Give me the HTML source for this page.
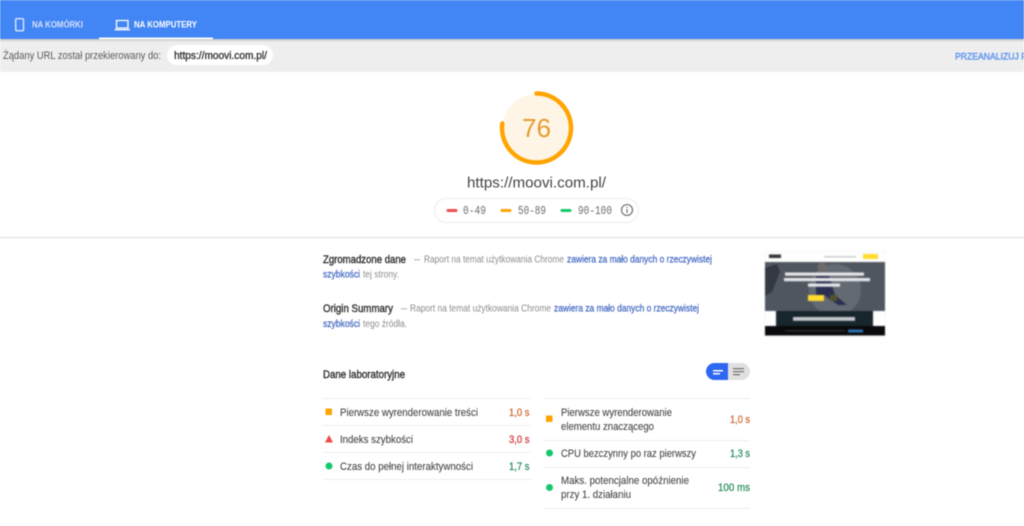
<!DOCTYPE html>
<html lang="pl"><head><meta charset="utf-8"><title>PageSpeed Insights</title>
<style>
html,body{margin:0;padding:0;background:#fff;width:1024px;height:526px;overflow:hidden}
svg{display:block;filter:blur(.45px)}
text{font-family:"Liberation Sans",sans-serif;white-space:pre}
.m{font-family:"Liberation Mono",monospace;font-size:11.5px;fill:#6a6a6a}
.b{font-size:11px;fill:#444;stroke:#444;stroke-width:.1px}
.g{font-size:10px;fill:#8c8c8c}
.l{font-size:10px;fill:#4a6fc4;stroke:#4a6fc4;stroke-width:.3px}
.h{font-size:11px;fill:#333;stroke:#333;stroke-width:.4px}
.v{font-size:11px;stroke-width:.3px}
.o{fill:#cf6f3c;stroke:#cf6f3c}.r{fill:#d2403f;stroke:#d2403f}.p{fill:#2f9261;stroke:#2f9261}
</style></head><body>
<svg width="1024" height="526" viewBox="0 0 1024 526" xmlns="http://www.w3.org/2000/svg">
<defs><linearGradient id="s" x1="0" y1="0" x2="0" y2="1"><stop offset="0" stop-color="#c4c4c4"/><stop offset="1" stop-color="#eee"/></linearGradient></defs>
<rect x="0" y="39" width="1024" height="33" fill="#eeeeee"/>
<rect x="0" y="39" width="1024" height="3" fill="url(#s)"/>
<rect x="0" y="0" width="1024" height="39" fill="#4285f4"/>
<rect x="99" y="37.5" width="114" height="1.7" fill="#fff"/>
<rect x="15.700" y="18.700" width="7.800" height="12" rx="1" fill="none" stroke="#dce8fd" stroke-width="1.400"/>
<path d="M116.500 20.500h11.500v7.500h-11.500zM114.500 29.700h15.500" fill="none" stroke="#fff" stroke-width="1.300"/>
<text x="32" y="27.500" font-size="9.500" font-weight="bold" fill="#d3e2fc" textLength="51" lengthAdjust="spacingAndGlyphs">NA KOMÓRKI</text>
<text x="134" y="27.500" font-size="9.500" font-weight="bold" fill="#fff" textLength="63" lengthAdjust="spacingAndGlyphs">NA KOMPUTERY</text>

<text x="3" y="59" font-size="11" fill="#5a5a5a" textLength="158" lengthAdjust="spacingAndGlyphs">Żądany URL został przekierowany do:</text>
<rect x="167" y="45" width="106" height="20" rx="10" fill="#fff"/>
<text x="174" y="59" font-size="11" fill="#333" stroke="#333" stroke-width=".35" textLength="93" lengthAdjust="spacingAndGlyphs">https://moovi.com.pl/</text>
<text x="955" y="59.500" font-size="9.500" fill="#5f95ef" stroke="#5f95ef" stroke-width=".4" textLength="72" lengthAdjust="spacingAndGlyphs">PRZEANALIZUJ P</text>

<circle cx="536.500" cy="128" r="34" fill="#fff5e6"/>
<path d="M536.500 93.500A34.500 34.500 0 1 1 502.300 123.500" fill="none" stroke="#ffa400" stroke-width="4.500" stroke-linecap="round"/>
<text x="522" y="137" font-size="26" fill="#e59c2e" textLength="29" lengthAdjust="spacingAndGlyphs">76</text>
<text x="467" y="187.500" font-size="15" fill="#444" textLength="139" lengthAdjust="spacingAndGlyphs">https://moovi.com.pl/</text>

<rect x="434.500" y="198.500" width="204" height="24" rx="12" fill="#fff" stroke="#ececec"/>
<rect x="446.500" y="209" width="11" height="3" rx="1.500" fill="#ee4d4d"/>
<text class="m" x="463" y="214" textLength="23" lengthAdjust="spacingAndGlyphs">0-49</text>
<rect x="500.500" y="209" width="11" height="3" rx="1.500" fill="#ffa400"/>
<text class="m" x="518" y="214" textLength="28" lengthAdjust="spacingAndGlyphs">50-89</text>
<rect x="560.500" y="209" width="11" height="3" rx="1.500" fill="#17c76f"/>
<text class="m" x="578" y="214" textLength="34" lengthAdjust="spacingAndGlyphs">90-100</text>
<circle cx="627" cy="210" r="5.500" fill="none" stroke="#666" stroke-width="1.100"/>
<path d="M627 209v4M627 206.600v1.200" stroke="#666" stroke-width="1.100"/>

<rect x="0" y="237" width="1024" height="1" fill="#dcdcdc"/>

<text class="h" x="323" y="263" textLength="83" lengthAdjust="spacingAndGlyphs">Zgromadzone dane</text>
<text class="g" x="414" y="262.500" textLength="6" lengthAdjust="spacingAndGlyphs">—</text>
<text class="g" x="424" y="262.500" textLength="140" lengthAdjust="spacingAndGlyphs">Raport na temat użytkowania Chrome</text>
<text class="l" x="567" y="262.500" textLength="145" lengthAdjust="spacingAndGlyphs">zawiera za mało danych o rzeczywistej</text>
<text class="l" x="323" y="277.500" textLength="37" lengthAdjust="spacingAndGlyphs">szybkości</text>
<text class="g" x="363" y="277.500" textLength="36" lengthAdjust="spacingAndGlyphs">tej strony.</text>

<text class="h" x="323" y="312" textLength="70" lengthAdjust="spacingAndGlyphs">Origin Summary</text>
<text class="g" x="401" y="311.500" textLength="6" lengthAdjust="spacingAndGlyphs">—</text>
<text class="g" x="410" y="311.500" textLength="141" lengthAdjust="spacingAndGlyphs">Raport na temat użytkowania Chrome</text>
<text class="l" x="554" y="311.500" textLength="145" lengthAdjust="spacingAndGlyphs">zawiera za mało danych o rzeczywistej</text>
<text class="l" x="323" y="327" textLength="37" lengthAdjust="spacingAndGlyphs">szybkości</text>
<text class="g" x="363" y="327" textLength="44" lengthAdjust="spacingAndGlyphs">tego źródła.</text>

<!-- thumbnail -->
<g style="filter:blur(.6px)">
<rect x="765" y="252" width="120" height="84" fill="#fff" stroke="#eee" stroke-width=".5"/>
<rect x="769" y="254.500" width="12" height="3.500" fill="#333"/>
<rect x="824" y="256" width="32" height="1.500" fill="#ccc"/>
<rect x="863" y="254" width="15" height="5" fill="#ffdc2e"/>
<rect x="765" y="262" width="120" height="49" fill="#50565f"/>
<circle cx="835" cy="290" r="26" fill="#646a74"/>
<circle cx="822" cy="267" r="4.500" fill="#6f6a68"/>
<path d="M816 276h13l6 19 12 10h-9l-14-10h-8z" fill="#2b3050"/>
<path d="M765 268l12-4 3 8-8 20-7 4z" fill="#343941"/>
<rect x="785" y="272.500" width="79" height="3.200" fill="#e6e7ea"/>
<rect x="784" y="278" width="86" height="3.200" fill="#e6e7ea"/>
<rect x="808" y="283.500" width="32" height="3.200" fill="#e6e7ea"/>
<rect x="808" y="295" width="16" height="6" fill="#ffdc2e"/>
<rect x="830" y="295" width="7" height="6" fill="#50522c"/>
<rect x="776" y="311" width="97" height="15" fill="#16262c"/>
<rect x="793" y="317" width="62" height="3.800" fill="#c4c9cc"/>
<rect x="765" y="326" width="120" height="9.500" fill="#0a0a0c"/>
<rect x="785" y="330.300" width="60" height="1" fill="#3c3c3c"/>
<rect x="848" y="329.500" width="15" height="3" fill="#2a6fb0"/>
</g>

<text class="h" x="323" y="378" textLength="82" lengthAdjust="spacingAndGlyphs">Dane laboratoryjne</text>

<path d="M728 363h-13.500a8.500 8.500 0 0 0 0 17H728z" fill="#2f68f0"/>
<path d="M728 363h13.500a8.500 8.500 0 0 1 0 17H728z" fill="#e0e0e0"/>
<path d="M713 370h10v1.500h-10zM713 373h7v1.500h-7z" fill="#fff"/>
<path d="M733 368h11v1.200h-11zM733 371h11v1.200h-11zM733 374h7v1.200h-7z" fill="#757575"/>

<g fill="#ececec">
<rect x="323" y="398" width="208" height="1"/><rect x="323" y="425" width="208" height="1"/><rect x="323" y="452" width="208" height="1"/><rect x="323" y="479" width="208" height="1"/>
<rect x="544" y="398" width="206" height="1"/><rect x="544" y="440" width="206" height="1"/><rect x="544" y="467" width="206" height="1"/><rect x="544" y="508" width="206" height="1"/>
</g>
<rect x="325.500" y="408.500" width="6.500" height="6.500" fill="#ffa400"/>
<path d="M329 435l4 7.500h-8z" fill="#f04a4a"/>
<circle cx="329" cy="466" r="3.500" fill="#17c76f"/>
<rect x="546" y="415.500" width="6.500" height="6.500" fill="#ffa400"/>
<circle cx="549.500" cy="453" r="3.500" fill="#17c76f"/>
<circle cx="549.500" cy="487.500" r="3.500" fill="#17c76f"/>

<text class="b" x="340" y="416" textLength="138" lengthAdjust="spacingAndGlyphs">Pierwsze wyrenderowanie treści</text>
<text class="b" x="340" y="443" textLength="73" lengthAdjust="spacingAndGlyphs">Indeks szybkości</text>
<text class="b" x="340" y="470" textLength="133" lengthAdjust="spacingAndGlyphs">Czas do pełnej interaktywności</text>
<text class="v o" x="509" y="416" textLength="20.500" lengthAdjust="spacingAndGlyphs">1,0 s</text>
<text class="v r" x="509" y="443" textLength="20.500" lengthAdjust="spacingAndGlyphs">3,0 s</text>
<text class="v p" x="509" y="470" textLength="20.500" lengthAdjust="spacingAndGlyphs">1,7 s</text>

<text class="b" x="561" y="416" textLength="111" lengthAdjust="spacingAndGlyphs">Pierwsze wyrenderowanie</text>
<text class="b" x="561" y="430" textLength="93" lengthAdjust="spacingAndGlyphs">elementu znaczącego</text>
<text class="b" x="561" y="457" textLength="135" lengthAdjust="spacingAndGlyphs">CPU bezczynny po raz pierwszy</text>
<text class="b" x="561" y="484" textLength="128" lengthAdjust="spacingAndGlyphs">Maks. potencjalne opóźnienie</text>
<text class="b" x="561" y="498" textLength="70" lengthAdjust="spacingAndGlyphs">przy 1. działaniu</text>
<text class="v o" x="730" y="423" textLength="20" lengthAdjust="spacingAndGlyphs">1,0 s</text>
<text class="v p" x="730" y="457" textLength="20" lengthAdjust="spacingAndGlyphs">1,3 s</text>
<text class="v p" x="718" y="491" textLength="32" lengthAdjust="spacingAndGlyphs">100 ms</text>
</svg>
</body></html>
